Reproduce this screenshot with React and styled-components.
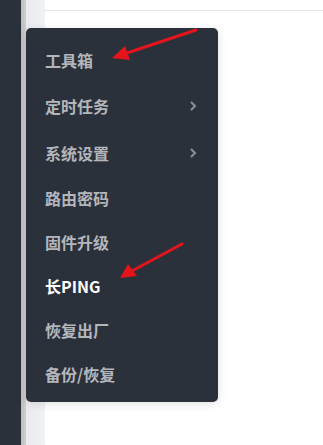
import React from 'react';
import styled, { createGlobalStyle } from 'styled-components';

const GlobalStyle = createGlobalStyle`
  html, body {
    margin: 0;
    padding: 0;
    background: #ffffff;
  }
  body {
    font-family: "Noto Sans CJK SC", "Noto Sans", sans-serif;
  }
`;

// page shell
const Page = styled.div`
  position: relative;
  display: flex;
  width: 323px;
  height: 445px;
  overflow: hidden;
`;

const Sidebar = styled.div`
  width: 21px;
  background: #2a313b;
`;

const Edge = styled.div`
  width: 5px;
  background: linear-gradient(to right, #bdbdbd, #d0d0d0);
`;

const Gutter = styled.div`
  width: 19px;
  background: linear-gradient(to right, #e9ebef, #f1f2f5);
`;

const Content = styled.div`
  flex: 1;
  background: #fff;
`;

const TopLine = styled.div`
  height: 10px;
  border-bottom: 1px solid #e4e4e4;
`;

// dropdown
const Menu = styled.ul`
  position: absolute;
  left: 26px;
  top: 28px;
  width: 192px;
  margin: 0;
  padding: 10px 0 6px;
  list-style: none;
  background: #2b313b;
  border-radius: 5px;
  box-shadow: 0 2px 10px rgba(0, 0, 0, 0.12);
`;

const Item = styled.li`
  display: flex;
  align-items: center;
  justify-content: space-between;
  height: ${p => (p.$sub ? 47 : 44)}px;
  padding: 0 21px 0 19px;
  font-size: 16px;
  font-weight: 700;
  color: ${p => (p.$active ? '#ffffff' : '#b3b6bb')};
  cursor: pointer;
`;

const Chevron = styled.svg`
  width: 8px;
  height: 12px;
`;

const Arrows = styled.svg`
  position: absolute;
  left: 0;
  top: 0;
  width: 323px;
  height: 445px;
  pointer-events: none;
`;

const items = [
  { label: '工具箱' },
  { label: '定时任务', sub: true },
  { label: '系统设置', sub: true },
  { label: '路由密码' },
  { label: '固件升级' },
  { label: '长PING', active: true },
  { label: '恢复出厂' },
  { label: '备份/恢复' },
];

function App() {
  return (
    <>
      <GlobalStyle />
      <Page>
        <Sidebar />
        <Edge />
        <Gutter />
        <Content>
          <TopLine />
        </Content>

        <Menu>
          {items.map(item => (
            <Item key={item.label} $sub={item.sub} $active={item.active}>
              {item.label}
              {item.sub && (
                <Chevron viewBox="0 0 8 12">
                  <path d="M2 2 L6 6 L2 10" fill="none" stroke="#8b9097" strokeWidth="2" />
                </Chevron>
              )}
            </Item>
          ))}
        </Menu>

        <Arrows viewBox="0 0 323 445">
          <line x1="196" y1="30" x2="124" y2="54" stroke="#e3141b" strokeWidth="3" strokeLinecap="round" />
          <polygon points="112,58 125,46 130,60" fill="#e3141b" />
          <line x1="182" y1="244" x2="130" y2="272" stroke="#e3141b" strokeWidth="3" strokeLinecap="round" />
          <polygon points="120,278 128,264 137,276" fill="#e3141b" />
        </Arrows>
      </Page>
    </>
  );
}

export default App;
